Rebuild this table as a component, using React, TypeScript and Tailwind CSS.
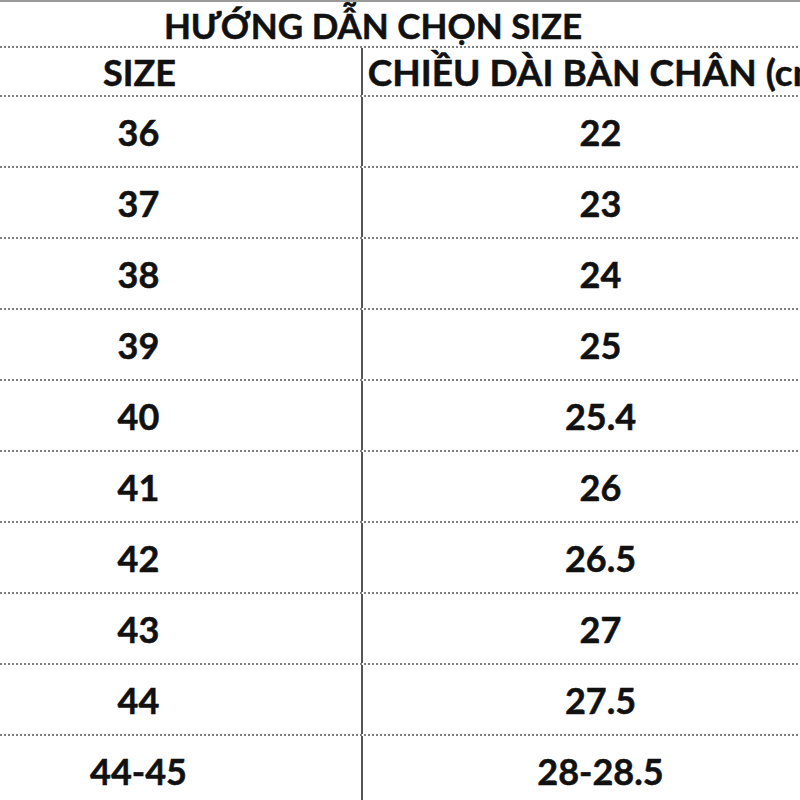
import React from 'react';

const rows = [
  ['36', '22'],
  ['37', '23'],
  ['38', '24'],
  ['39', '25'],
  ['40', '25.4'],
  ['41', '26'],
  ['42', '26.5'],
  ['43', '27'],
  ['44', '27.5'],
  ['44-45', '28-28.5'],
];

const App = () => {
  return (
    <div
      className="w-[800px] h-[800px] overflow-hidden bg-white text-[#111] [-webkit-text-stroke:0.5px_#111]"
      style={{ fontFamily: 'Lato, "Open Sans", sans-serif' }}
    >
      <div className="ml-[-84px] w-[922px] border-t-2 border-[#9a9a9a]">
        <div className="h-[46px] flex items-center justify-center border-b-2 border-dotted border-[#808080]">
          <h1 className="text-[35px] font-bold leading-none pt-[2px] pr-[8px]">HƯỚNG DẪN CHỌN SIZE</h1>
        </div>

        <div className="grid grid-cols-[447px_475px] h-[49px] border-b-2 border-dotted border-[#808080]">
          <div className="flex items-center justify-center border-r-2 border-[#555] pl-[2px]">
            <span className="text-[36px] font-bold leading-none">SIZE</span>
          </div>
          <div className="flex items-center justify-center">
            <span className="text-[37px] font-bold leading-none whitespace-nowrap">
              CHIỀU DÀI BÀN CHÂN (cm)
            </span>
          </div>
        </div>

        {rows.map(([size, length]) => (
          <div
            key={size}
            className="grid grid-cols-[447px_475px] h-[71px] border-b-2 border-dotted border-[#808080]"
          >
            <div className="flex items-center justify-center border-r-2 border-[#555]">
              <span className="text-[36px] font-bold leading-none">{size}</span>
            </div>
            <div className="flex items-center justify-center">
              <span className="text-[36px] font-bold leading-none">{length}</span>
            </div>
          </div>
        ))}
      </div>
    </div>
  );
};

export default App;
